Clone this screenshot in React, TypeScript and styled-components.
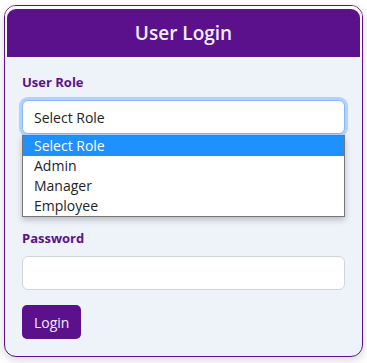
import React from 'react'
import styled, { createGlobalStyle } from 'styled-components'

const GlobalStyle = createGlobalStyle`
    * { box-sizing: border-box; }
    body {
        margin: 0;
        background: #ffffff;
        font-family: "Open Sans", "Noto Sans", sans-serif;
    }
`
const Page = styled.div`
    padding: 5px 4px 6px 4px;
`
const Card = styled.div`
    border: 1px solid #5c118c;
    border-radius: 12px;
    background: #eef2f9;
    overflow: hidden;
    box-shadow: 0 3px 10px rgba(0, 0, 0, 0.16);
`
const HeaderWrap = styled.div`
    background: #fbfbfe;
    padding: 3px 2px 0 2px;
`
const Header = styled.h2`
    margin: 0;
    height: 48px;
    display: flex;
    align-items: center;
    justify-content: center;
    background: #5c118c;
    border-radius: 9px 9px 0 0;
    color: #f1effc;
    font-size: 19px;
    font-weight: 600;
`
const Body = styled.form`
    padding: 16px 17px 17px 17px;
    display: flex;
    flex-direction: column;
    gap: 17px;
`
const Group = styled.div`
    position: relative;
    display: flex;
    flex-direction: column;
`
// room left under the open role list
const ListRoom = styled.div`
    height: 61px;
`
const Label = styled.label`
    color: #5c118c;
    font-size: 13px;
    font-weight: 700;
    line-height: 19.5px;
    margin-bottom: 7.5px;
`
const Field = styled.div<{ $focused?: boolean }>`
    height: 34px;
    background: #ffffff;
    border: 1px solid ${props => props.$focused ? '#86b7fe' : '#d1d5e0'};
    border-radius: 6px;
    box-shadow: ${props => props.$focused ? '0 0 0 3px rgba(13, 110, 253, 0.25)' : 'none'};
    padding: 0 11px;
    display: flex;
    align-items: center;
    font-size: 14px;
    color: #212529;
`
const Options = styled.ul`
    position: absolute;
    left: 0;
    right: 0;
    top: 100%;
    margin: 1px 0 0 0;
    padding: 0;
    list-style: none;
    background: #ffffff;
    border: 1px solid #767676;
    box-shadow: 0 3px 6px rgba(0, 0, 0, 0.22);
    z-index: 2;
`
const Option = styled.li<{ $active?: boolean }>`
    height: 20px;
    line-height: 20px;
    padding-left: 11px;
    font-size: 14px;
    background: ${props => props.$active ? '#1e90ff' : '#ffffff'};
    color: ${props => props.$active ? '#ffffff' : '#212529'};
`
const Button = styled.button`
    align-self: flex-start;
    margin-top: -2px;
    height: 34px;
    padding: 0 12px;
    border: none;
    border-radius: 5px;
    background: #5c118c;
    color: #f1effc;
    font-family: inherit;
    font-size: 14px;
`

const roles = ['Select Role', 'Admin', 'Manager', 'Employee']

export default function App() {
    return (
        <>
            <GlobalStyle />
            <Page>
                <Card>
                    <HeaderWrap>
                        <Header>User Login</Header>
                    </HeaderWrap>
                    <Body onSubmit={e => e.preventDefault()}>
                        <Group>
                            <Label>User Role</Label>
                            <Field $focused>Select Role</Field>
                            <Options>
                                {roles.map((r, i) => (
                                    <Option key={r} $active={i === 0}>{r}</Option>
                                ))}
                            </Options>
                        </Group>
                        <ListRoom />
                        <Group>
                            <Label>Password</Label>
                            <Field />
                        </Group>
                        <Button type="submit">Login</Button>
                    </Body>
                </Card>
            </Page>
        </>
    )
}
